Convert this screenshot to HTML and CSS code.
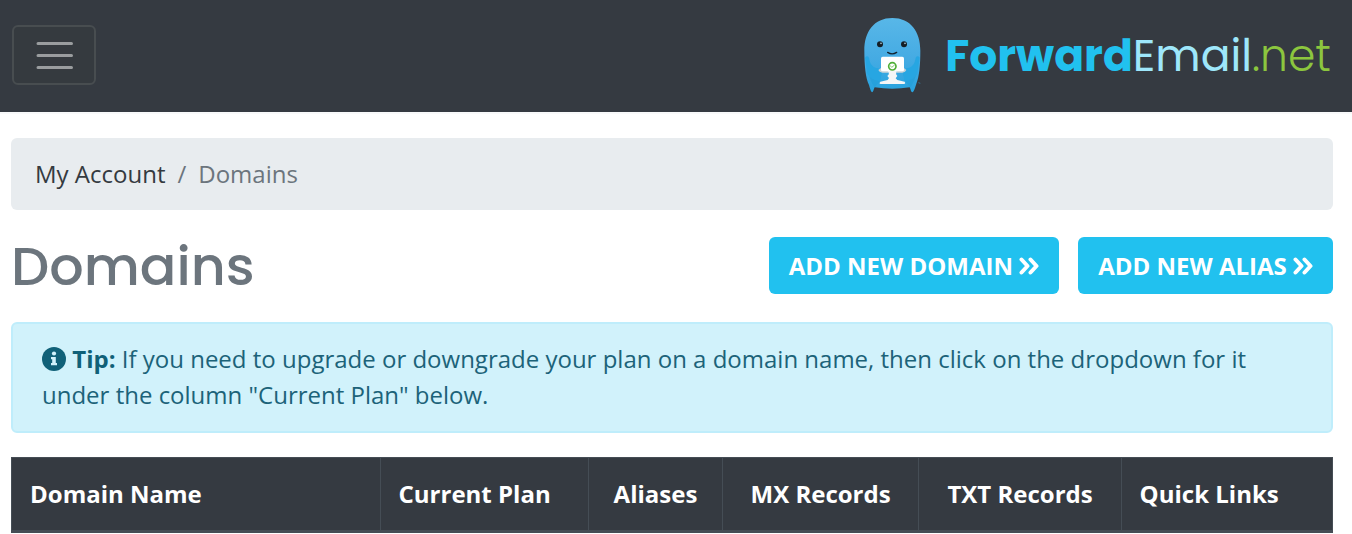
FILE: index.html
```html
<!DOCTYPE html>
<html lang="en">
<head>
<meta charset="utf-8">
<meta name="viewport" content="width=device-width, initial-scale=1">
<title>Domains - ForwardEmail.net</title>
<link rel="stylesheet" href="styles.css">
</head>
<body>
<header class="navbar">
  <button class="toggler" type="button" aria-label="Toggle navigation">
    <svg width="37" height="28" viewBox="0 0 37 28" aria-hidden="true"><path d="M2 2.500H35.500M2 14.500H35.500M2 26.500H35.500" stroke="#9a9d9f" stroke-width="3" stroke-linecap="round"/></svg>
  </button>
  <a class="brand" href="#">
    <svg class="mascot" viewBox="39 39 171 225" aria-hidden="true">
      <defs>
        <linearGradient id="skin" x1="0" y1="0" x2="0" y2="1"><stop offset="0" stop-color="#58b7e8"/><stop offset="0.550" stop-color="#45abe3"/><stop offset="1" stop-color="#27a3df"/></linearGradient>
      </defs>
      <path fill="url(#skin)" d="M124 39C69 39 40 80 40 137C40 181 44 220 54 240C57 250 59 259 63 262C67 262 68 252 71 247Q124 255 176 247C179 252 180 262 184 262C189 260 193 245 196 236C205 214 208 180 208 137C208 80 179 39 124 39Z"/>
      <path fill="#219ed9" opacity="0.600" d="M45 160Q49 184 64 190L86 193L92 205L85 231L71 247Q52 225 45 160ZM203 160Q199 184 184 190L162 193L156 205L164 231L178 247Q197 225 203 160Z"/>
      <path fill="#27a6e2" d="M42 158Q48 150 54 158C57 178 65 188 83 190L92 202L88 228Q64 229 49 207ZM206 158Q200 150 194 158C191 178 183 188 165 190L156 202L160 228Q184 229 199 207Z"/>
      <circle cx="87" cy="118" r="9" fill="#151e25"/><circle cx="159" cy="118" r="9" fill="#151e25"/>
      <circle cx="90" cy="115" r="2.500" fill="#b6d8e8"/><circle cx="162" cy="115" r="2.500" fill="#b6d8e8"/>
      <path d="M110 142Q123 151 137 142" fill="none" stroke="#13222d" stroke-width="4" stroke-linecap="round"/>
      <path fill="#c9d3d8" d="M91 188L82 195Q84 202 94 203H111V198ZM158 188L166 195Q164 202 154 203H137V198Z"/>
      <rect x="90" y="155" width="69" height="44" rx="5" fill="#fff"/>
      <path fill="#f4f6f7" d="M110 197H138L135 207L139 213L134 220L139 225L161 230Q165 236 159 237H89Q83 236 88 230L110 225L114 219L109 213L114 207Z"/>
      <circle cx="124" cy="184" r="11" fill="#fff" stroke="#50af37" stroke-width="5"/>
      <path d="M117 181L122 187L131 180" fill="none" stroke="#8ac976" stroke-width="3"/>
      <path d="M202 233L208 235" stroke="#3189b5" stroke-width="2"/>
    </svg>
    <span class="wordmark"><b>Forward</b><span class="email">Email</span><span class="tld">.net</span></span>
  </a>
</header>
<main class="page">
  <nav class="breadcrumb" aria-label="Breadcrumb">
    <a href="#">My Account</a><span>/</span><span aria-current="page">Domains</span>
  </nav>
  <div class="heading">
    <h1>Domains</h1>
    <div class="actions">
      <button class="btn" type="button">ADD NEW DOMAIN <svg class="chevrons" viewBox="0 0 20 18" aria-hidden="true"><path d="M2.500 2.500L8.500 9L2.500 15.500M11.500 2.500L17.500 9L11.500 15.500"/></svg></button>
      <button class="btn" type="button">ADD NEW ALIAS <svg class="chevrons" viewBox="0 0 20 18" aria-hidden="true"><path d="M2.500 2.500L8.500 9L2.500 15.500M11.500 2.500L17.500 9L11.500 15.500"/></svg></button>
    </div>
  </div>
  <p class="alert"><svg class="info" viewBox="0 0 24 24" aria-hidden="true"><circle cx="12" cy="12" r="12" fill="#106178"/><circle cx="12" cy="6.500" r="2.100" fill="#d1f2fb"/><path fill="#d1f2fb" d="M9 10H13.800V16H15V18.200H9V16H10.200V12.200H9Z"/></svg> <strong>Tip:</strong> If you need to upgrade or downgrade your plan on a domain name, then click on the dropdown for it under the column "Current Plan" below.</p>
  <table class="domains">
    <colgroup><col class="c-name"><col class="c-plan"><col class="c-alias"><col class="c-mx"><col class="c-txt"><col class="c-links"></colgroup>
    <thead>
      <tr><th scope="col">Domain Name</th><th scope="col">Current Plan</th><th scope="col" class="center">Aliases</th><th scope="col" class="center">MX Records</th><th scope="col" class="center">TXT Records</th><th scope="col">Quick Links</th></tr>
    </thead>
  </table>
</main>
</body>
</html>
```
FILE: styles.css
```css
* { box-sizing: border-box; }
body {
  margin: 0;
  background: #fff;
  color: #343a40;
  font: 24px/36px "Open Sans", "Noto Sans", sans-serif;
}
a { color: inherit; text-decoration: none; }
.navbar {
  display: flex;
  align-items: center;
  justify-content: space-between;
  height: 114px;
  padding: 0 21px 2px 12px;
  border-bottom: 2px solid #f8f9fa;
  background: #353a41;
}
.toggler {
  display: flex;
  align-items: center;
  justify-content: center;
  width: 84px;
  height: 60px;
  padding: 0;
  border: 2px solid #484d50;
  border-radius: 6px;
  background: #353a3f;
}
.brand { display: flex; align-items: center; gap: 24px; }
.mascot { width: 57px; height: 75px; }
.wordmark {
  padding-top: 2px;
  color: #21c1ef;
  font: 300 44px/60px Poppins, Inter, sans-serif;
}
.wordmark b { font-weight: 700; }
.email { color: #9ee7fb; font-weight: 400; }
.tld { color: #8cc63e; }
.page { padding: 24px 19px 0 11px; }
.breadcrumb {
  display: flex;
  gap: 12px;
  padding: 18px 24px;
  border-radius: 6px;
  background: #e8ecef;
  color: #6c757d;
}
.breadcrumb a { color: #343a40; }
.heading {
  display: flex;
  align-items: center;
  justify-content: space-between;
  margin: 27px 0 28px;
}
h1 {
  margin: 0;
  padding-top: 2px;
  color: #6c757d;
  font: 500 54px/55px Poppins, Inter, sans-serif;
}
.actions { display: flex; gap: 19px; }
.btn {
  padding: 11px 20px 10px;
  border: 0;
  border-radius: 6px;
  background: #21c1ef;
  color: #fff;
  font: 700 24px/36px "Open Sans", "Noto Sans", sans-serif;
}
.chevrons {
  width: 20px;
  height: 18px;
  fill: none;
  stroke: #fff;
  stroke-width: 4;
  stroke-linecap: round;
  stroke-linejoin: round;
}
.alert {
  margin: 0 0 24px;
  padding: 17px 29px 18px;
  border: 2px solid #bfedfb;
  border-radius: 6px;
  background: #d1f2fb;
  color: #1c6379;
}
.alert strong { color: #106178; }
.info { width: 24px; height: 24px; vertical-align: -3px; }
.domains {
  width: 100%;
  table-layout: fixed;
  border-collapse: collapse;
}
.domains th {
  padding: 18px;
  border: 1px solid #454d55;
  border-bottom-width: 3px;
  background: #353a41;
  color: #fff;
  font-weight: 700;
  text-align: left;
}
.domains th.center { text-align: center; }
.c-name { width: 27.9%; }
.c-plan { width: 15.8%; }
.c-alias { width: 10.1%; }
.c-mx { width: 14.9%; }
.c-txt { width: 15.3%; }
.c-links { width: 16%; }
```
